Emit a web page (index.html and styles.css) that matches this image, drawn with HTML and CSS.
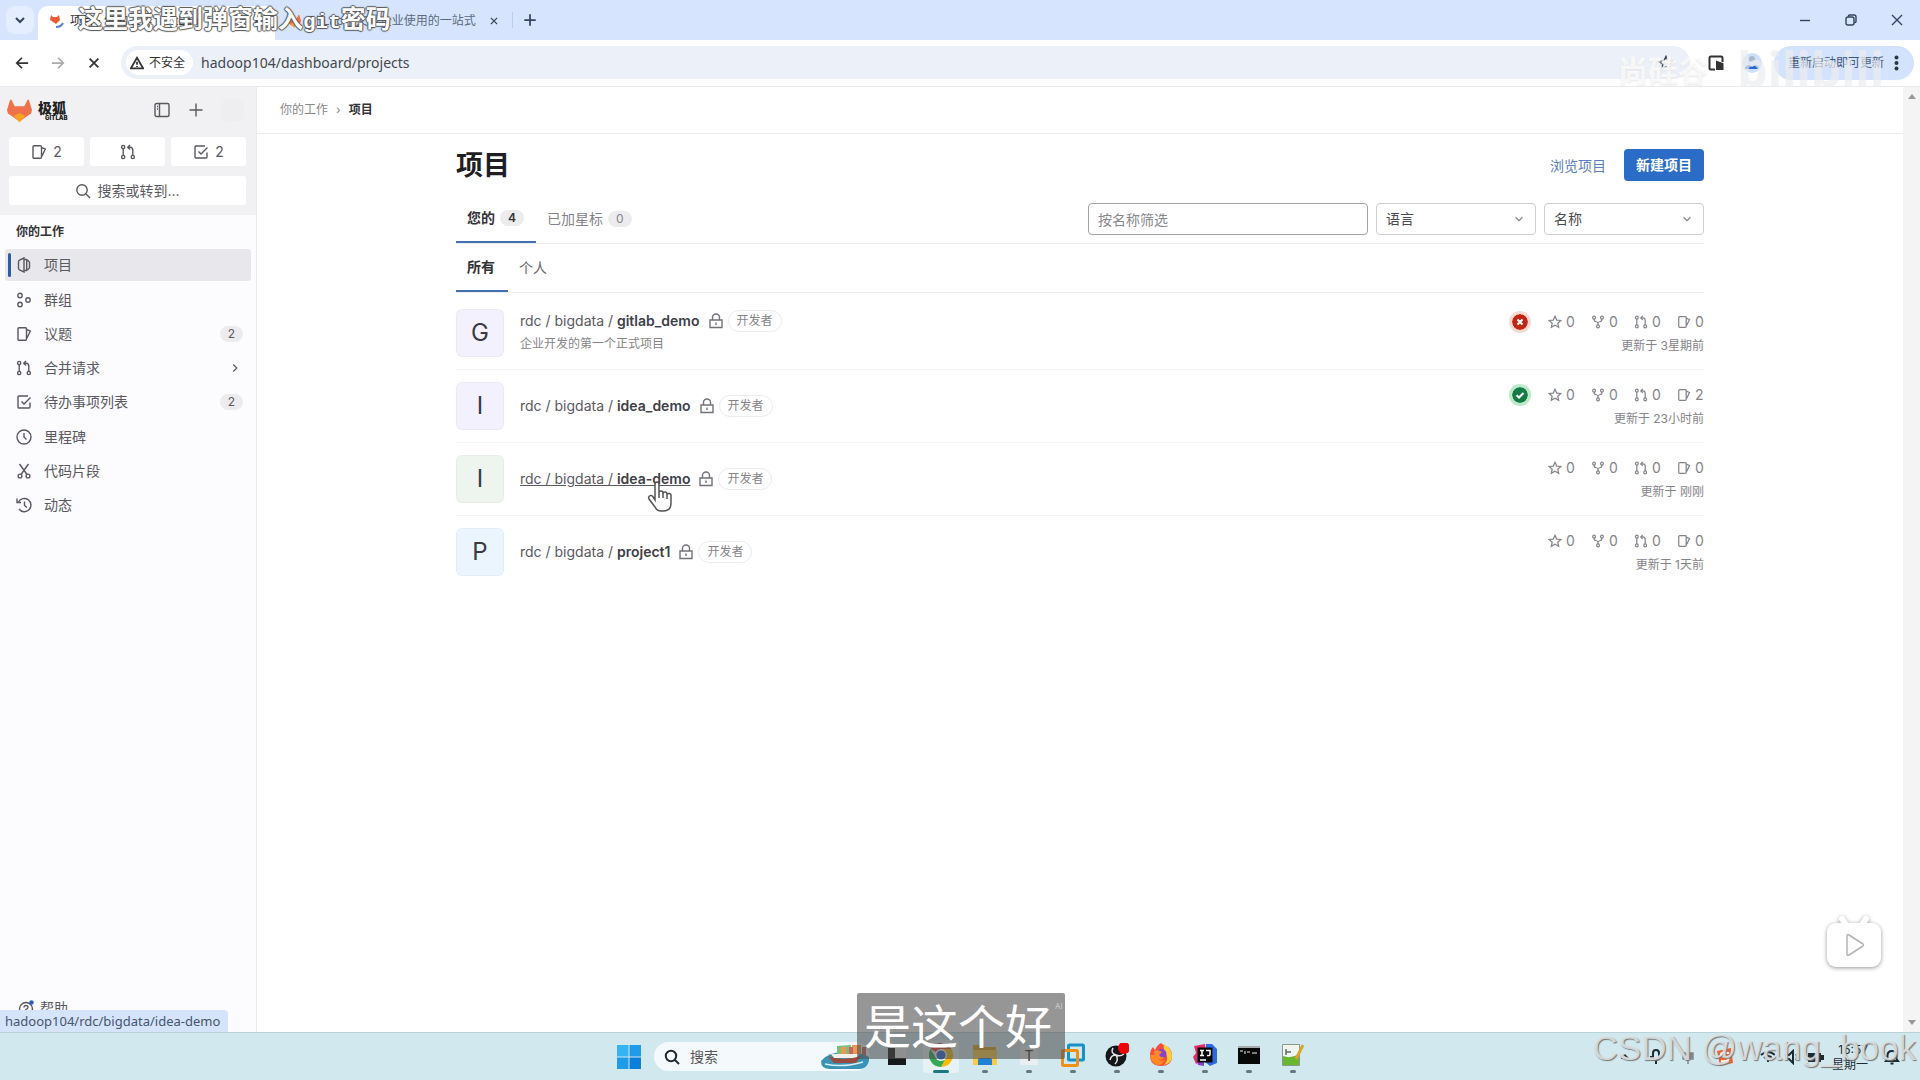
FILE: index.html
```html
<!DOCTYPE html>
<html lang="zh-CN">
<head>
<meta charset="utf-8">
<title>项目 · 你的工作 · GitLab</title>
<link rel="stylesheet" href="styles.css">
</head>
<body>
<svg class="sprite" aria-hidden="true">
  <symbol id="fox" viewBox="0 0 26 25"><path fill="#f0704c" d="M13 24 1 15.500 0 12 3 2Q4 0 5 2L8 8H18L21 2Q22 0 23 2L26 12 25 15.500Z"/><path fill="#fb8a3c" d="M0 12 13 24 5 17ZM26 12 13 24 21 17Z"/><path fill="#fca326" d="m7 18 6-3 6 3-6 7Z"/></symbol>
  <symbol id="issue" viewBox="0 0 16 16"><path d="M3 1.800h6.500a1 1 0 0 1 1 1v10.400a1 1 0 0 1-1 1H3a1 1 0 0 1-1-1V2.800a1 1 0 0 1 1-1ZM10.500 3.500l3.800 1.600L11 12"/></symbol>
  <symbol id="merge" viewBox="0 0 16 16"><circle cx="3.200" cy="3" r="1.600"/><circle cx="3.200" cy="13" r="1.600"/><circle cx="12.800" cy="13" r="1.600"/><path d="M3.200 4.600v6.800M12.800 11.400V6q0-2.700-2.700-2.700H8M10 1 7.700 3.300 10 5.600"/></symbol>
  <symbol id="todo" viewBox="0 0 16 16"><path d="M14 8.500V13a1 1 0 0 1-1 1H3a1 1 0 0 1-1-1V3a1 1 0 0 1 1-1h9M5.500 7.500 8 10l6.500-6.500"/></symbol>
  <symbol id="search" viewBox="0 0 16 16"><circle cx="7" cy="7" r="5.200"/><path d="m11 11 4 4"/></symbol>
  <symbol id="project" viewBox="0 0 16 16"><path d="M8 1 3.500 3.200Q2.500 3.800 2.500 5v6q0 1.200 1 1.800L8 15ZM8 2.500h2.500l2.500 2q.500.500.500 1.200v4.600q0 .700-.500 1.200l-2.500 2H8M10.700 2.800v10.400"/></symbol>
  <symbol id="group" viewBox="0 0 16 16"><circle cx="4" cy="3.500" r="2.200"/><circle cx="4" cy="12.500" r="2.200"/><circle cx="12" cy="8" r="2.200"/></symbol>
  <symbol id="clock" viewBox="0 0 16 16"><circle cx="8" cy="8" r="7"/><path d="M8 4v4l2.500 2.500"/></symbol>
  <symbol id="snippet" viewBox="0 0 16 16"><circle cx="4" cy="13" r="1.900"/><circle cx="12" cy="13" r="1.900"/><path d="M3.500 1 11 11.500M12.500 1 5 11.500"/></symbol>
  <symbol id="history" viewBox="0 0 16 16"><path d="M2.500 5a6.600 6.600 0 1 1 .500 7M1 1.500V5.500h4M8.500 4.500v4L11 10.500"/></symbol>
  <symbol id="lock" viewBox="0 0 16 16"><path d="M2 7h12v7.500H2ZM4.500 7V4.500a3.500 3.500 0 0 1 7 0V7M8 9.500v2.500"/></symbol>
  <symbol id="star" viewBox="0 0 16 16"><path d="m8 1.500 2 4.300 4.700.500-3.500 3.100 1 4.600L8 11.700 3.800 14l1-4.600L1.300 6.300 6 5.800Z"/></symbol>
  <symbol id="fork" viewBox="0 0 16 16"><circle cx="3.500" cy="3" r="1.600"/><circle cx="12.500" cy="3" r="1.600"/><circle cx="8" cy="13" r="1.600"/><path d="M3.500 4.600q0 2.900 2.500 3.100 2 .200 2 1.800v2M12.500 4.600q0 2.900-2.500 3.100-2 .200-2 1.800"/></symbol>
  <symbol id="chev" viewBox="0 0 16 16"><path d="m4 6 4 4 4-4"/></symbol>
  <symbol id="chevr" viewBox="0 0 16 16"><path d="m6 4 4 4-4 4"/></symbol>
  <symbol id="x" viewBox="0 0 16 16"><path d="m3 3 10 10M13 3 3 13"/></symbol>
  <symbol id="plus" viewBox="0 0 16 16"><path d="M8 1.500v13M1.500 8h13"/></symbol>
  <symbol id="arrow" viewBox="0 0 16 16"><path d="M15 8H2M8 2 2 8l6 6"/></symbol>
</svg>

<header class="browser">
  <div class="tabstrip">
    <button class="tab-menu" aria-label="搜索标签页"><svg class="i bold"><use href="#chev"/></svg></button>
    <div class="tab active">
      <svg class="fav" viewBox="0 0 14 14"><path fill="#ee5a32" d="M6 10 0 6 1 1l2 2h4l2-2 1 5Z"/><path fill="none" stroke="#5b7fd6" stroke-width="2" d="M6 13q5 0 7-4"/></svg><span class="tab-title">项目 · 你的工作 · GitLab</span>
      <button class="bare" aria-label="关闭"><svg class="i tiny bold"><use href="#x"/></svg></button>
    </div>
    <div class="tab">
      <svg class="fav"><use href="#fox"/></svg><span class="tab-title fade">GitLab中文版企业使用的一站式</span>
      <button class="bare" aria-label="关闭"><svg class="i tiny bold"><use href="#x"/></svg></button>
    </div>
    <button class="bare newtab" aria-label="新标签页"><svg class="i small bold"><use href="#plus"/></svg></button>
    <div class="winctl">
      <button class="bare" aria-label="最小化"><svg class="i" viewBox="0 0 16 16"><path d="M3 8.500h10"/></svg></button>
      <button class="bare" aria-label="还原"><svg class="i" viewBox="0 0 16 16"><rect x="3" y="5" width="8" height="8" rx="2"/><path d="M5.500 5V4q0-1 1-1H11q2 0 2 2v4.500q0 1-1 1h-1"/></svg></button>
      <button class="bare" aria-label="关闭"><svg class="i"><use href="#x"/></svg></button>
    </div>
  </div>
  <div class="toolbar">
    <button class="bare nav" aria-label="后退"><svg class="i small bold"><use href="#arrow"/></svg></button>
    <button class="bare nav dim" aria-label="前进"><svg class="i small bold flip"><use href="#arrow"/></svg></button>
    <button class="bare nav" aria-label="停止"><svg class="i small bold"><use href="#x"/></svg></button>
    <div class="omnibox">
      <button class="chip"><svg class="i small bold" viewBox="0 0 16 16"><path d="M8 2 1 14h14ZM8 6.500v3.500M8 11.500v1.200"/></svg>不安全</button>
      <input class="url" aria-label="网址" value="hadoop104/dashboard/projects">
      <svg class="i"><use href="#star"/></svg>
    </div>
    <button class="bare ext" aria-label="扩展程序"><svg class="i bold" viewBox="0 0 16 16"><path d="M7 14.500H3q-1.500 0-1.500-1.500V3Q1.500 1.500 3 1.500h10q1.500 0 1.500 1.500v4"/><path fill="#333" d="M9 7v7h5.500V9Z"/></svg></button>
    <button class="bare user" aria-label="用户"><svg width="20" height="20" viewBox="0 0 20 20"><circle cx="10" cy="10" r="10" fill="#cfe0fb"/><circle cx="10" cy="6" r="3" fill="#aab8ca"/><path fill="#2866d2" d="M3 16q0-3.500 4-4l3 2 3-2q4 .500 4 4Z"/></svg></button>
    <button class="relaunch">重新启动即可更新<svg width="5" height="16" viewBox="0 0 5 16" fill="#2b3647"><circle cx="2.500" cy="2.500" r="2"/><circle cx="2.500" cy="8" r="2"/><circle cx="2.500" cy="13.500" r="2"/></svg></button>
  </div>
</header>

<div class="page">
  <aside class="sidebar">
    <div class="side-top">
      <div class="brand">
        <svg class="logo"><use href="#fox"/></svg>
        <div class="brand-name">极狐<small>GITLAB</small></div>
        <button class="bare" aria-label="收起侧边栏"><svg class="i" viewBox="0 0 16 16"><rect x="1" y="1.500" width="14" height="13" rx="1.500"/><path d="M5.500 1.500v13M3 4.500h1M3 7h1"/></svg></button>
        <button class="bare" aria-label="新建"><svg class="i"><use href="#plus"/></svg></button>
        <span class="me"></span>
      </div>
      <div class="counts">
        <button><svg class="i"><use href="#issue"/></svg>2</button>
        <button aria-label="合并请求"><svg class="i"><use href="#merge"/></svg></button>
        <button><svg class="i"><use href="#todo"/></svg>2</button>
      </div>
      <button class="goto"><svg class="i"><use href="#search"/></svg>搜索或转到...</button>
    </div>
    <h2 class="side-title">你的工作</h2>
    <nav class="side-nav">
      <a href="#" class="current"><svg class="i"><use href="#project"/></svg>项目</a>
      <a href="#"><svg class="i"><use href="#group"/></svg>群组</a>
      <a href="#"><svg class="i"><use href="#issue"/></svg>议题<span class="pill">2</span></a>
      <a href="#"><svg class="i"><use href="#merge"/></svg>合并请求<svg class="i small end"><use href="#chevr"/></svg></a>
      <a href="#"><svg class="i"><use href="#todo"/></svg>待办事项列表<span class="pill">2</span></a>
      <a href="#"><svg class="i"><use href="#clock"/></svg>里程碑</a>
      <a href="#"><svg class="i"><use href="#snippet"/></svg>代码片段</a>
      <a href="#"><svg class="i"><use href="#history"/></svg>动态</a>
    </nav>
    <button class="help"><svg class="i" viewBox="0 0 16 16"><circle cx="8" cy="9" r="6.500"/><path d="M6 7.500q0-2 2-2t2 2q0 1-2 2v1.500"/><circle cx="13.500" cy="2.500" r="2.200" fill="#2a5fc0" stroke="none"/></svg>帮助</button>
    <div class="link-status">hadoop104/rdc/bigdata/idea-demo</div>
  </aside>

  <main class="main">
    <nav class="crumbs"><a href="#">你的工作</a><span>›</span><b>项目</b></nav>
    <div class="content">
      <div class="heading">
        <h1>项目</h1>
        <a class="explore" href="#">浏览项目</a>
        <button class="primary">新建项目</button>
      </div>
      <div class="tabs">
        <a href="#" class="on">您的<span class="pill">4</span></a>
        <a href="#">已加星标<span class="pill">0</span></a>
        <div class="filters">
          <input class="field filter" aria-label="按名称筛选" placeholder="按名称筛选">
          <label class="pick"><select class="field" aria-label="语言"><option>语言</option></select><svg class="i small"><use href="#chev"/></svg></label>
          <label class="pick"><select class="field" aria-label="排序"><option>名称</option></select><svg class="i small"><use href="#chev"/></svg></label>
        </div>
      </div>
      <div class="tabs sub">
        <a href="#" class="on">所有</a>
        <a href="#">个人</a>
      </div>
      <ul class="projects">
        <li>
          <span class="avatar violet">G</span>
          <div class="info">
            <div class="line"><a href="#">rdc / bigdata / <b>gitlab_demo</b></a><svg class="i"><use href="#lock"/></svg><span class="role">开发者</span></div>
            <p>企业开发的第一个正式项目</p>
          </div>
          <div class="meta">
            <div class="stats"><svg class="ci fail" viewBox="0 0 16 16"><circle cx="8" cy="8" r="8"/><path d="m5.500 5.500 5 5M10.500 5.500l-5 5"/></svg><span><svg class="i small"><use href="#star"/></svg>0</span><span><svg class="i small"><use href="#fork"/></svg>0</span><span><svg class="i small"><use href="#merge"/></svg>0</span><span><svg class="i small"><use href="#issue"/></svg>0</span></div>
            <time>更新于 3星期前</time>
          </div>
        </li>
        <li>
          <span class="avatar violet">I</span>
          <div class="info">
            <div class="line"><a href="#">rdc / bigdata / <b>idea_demo</b></a><svg class="i"><use href="#lock"/></svg><span class="role">开发者</span></div>
          </div>
          <div class="meta">
            <div class="stats"><svg class="ci pass" viewBox="0 0 16 16"><circle cx="8" cy="8" r="8"/><path d="m4.500 8.200 2.500 2.300 4.500-4.500"/></svg><span><svg class="i small"><use href="#star"/></svg>0</span><span><svg class="i small"><use href="#fork"/></svg>0</span><span><svg class="i small"><use href="#merge"/></svg>0</span><span><svg class="i small"><use href="#issue"/></svg>2</span></div>
            <time>更新于 23小时前</time>
          </div>
        </li>
        <li>
          <span class="avatar green">I</span>
          <div class="info">
            <div class="line"><a href="#" class="hovered">rdc / bigdata / <b>idea-demo</b><svg class="cursor" viewBox="0 0 26 32"><path d="M8 19V3.500Q8 1 10 1t2 2.500V12q0-2 2-2t2 2v1q0-2 2-2t2 2v1q0-1.500 2-1.500t2 2V22q0 8-8 8h-2q-4 0-6-4l-6-8q-1-2 .500-3t3 0Z"/><path fill="none" d="M12 12v5M16 13v4M20 14v4"/></svg></a><svg class="i"><use href="#lock"/></svg><span class="role">开发者</span></div>
          </div>
          <div class="meta">
            <div class="stats"><span><svg class="i small"><use href="#star"/></svg>0</span><span><svg class="i small"><use href="#fork"/></svg>0</span><span><svg class="i small"><use href="#merge"/></svg>0</span><span><svg class="i small"><use href="#issue"/></svg>0</span></div>
            <time>更新于 刚刚</time>
          </div>
        </li>
        <li>
          <span class="avatar blue">P</span>
          <div class="info">
            <div class="line"><a href="#">rdc / bigdata / <b>project1</b></a><svg class="i"><use href="#lock"/></svg><span class="role">开发者</span></div>
          </div>
          <div class="meta">
            <div class="stats"><span><svg class="i small"><use href="#star"/></svg>0</span><span><svg class="i small"><use href="#fork"/></svg>0</span><span><svg class="i small"><use href="#merge"/></svg>0</span><span><svg class="i small"><use href="#issue"/></svg>0</span></div>
            <time>更新于 1天前</time>
          </div>
        </li>
      </ul>
    </div>
  </main>
  <div class="scroll"><span class="up"></span><span class="down"></span></div>
</div>

<footer class="taskbar">
  <div class="dock">
    <svg class="win" viewBox="0 0 24 24"><path fill="#35b4f4" d="M0 0h11.500v11.500H0Z"/><path fill="#1e9be9" d="M12.500 0H24v11.500H12.500ZM0 12.500h11.500V24H0Z"/><path fill="#0c7fda" d="M12.500 12.500H24V24H12.500Z"/></svg>
    <div class="tasksearch">
      <svg class="i bold"><use href="#search"/></svg><input aria-label="搜索" placeholder="搜索">
      <svg width="50" height="27" viewBox="0 0 50 27"><path fill="#3a93b4" d="M1 18Q8 9 25 9t24 5q1 12-10 12H10Q1 26 1 18Z"/><path fill="#79bf7a" d="M17 3l14-1v9H17Z"/><path fill="#e89a55" d="M21 4h5v7h-5ZM32 2h9v9h-9Z"/><path fill="#c8645a" d="M29 4h4v7h-4ZM42 4h4v8h-4Z"/><path fill="#f6efe6" d="M11 11h28l-2 4H14Z"/><path fill="#9b4a3e" d="M8 13q14 6 33 0l-5 7H14Z"/><path stroke="#d9edf4" stroke-width="1.500" fill="none" d="M5 21q18 4 38-2"/></svg>
    </div>
    <div class="app"><svg viewBox="0 0 24 24"><path fill="#eceff0" d="M6 2h15v15H6Z"/><path fill="#15191b" d="M3 5h7v10h11v7H3Z"/></svg></div>
    <div class="app run front"><svg viewBox="0 0 24 24"><path fill="#ea4335" d="M12 12 1.600 6A12 12 0 0 1 22.400 6Z"/><path fill="#fbbc05" d="M12 12V6h10.400A12 12 0 0 1 12 24l5-9Z"/><path fill="#34a853" d="M1.600 6A12 12 0 0 0 12 24l5-9H7Z"/><circle cx="12" cy="12" r="6" fill="#fff"/><circle cx="12" cy="12" r="4.600" fill="#2566cf"/></svg></div>
    <div class="app run"><svg viewBox="0 0 24 24"><path fill="#dba21b" d="M0 2h9l2 2h12v8H0Z"/><path fill="#fbcb45" d="M0 7h24v15H0Z"/><path fill="#1f83d3" d="M5 22v-5q0-2 2-2h10q2 0 2 2v5Z"/></svg></div>
    <div class="app run"><svg viewBox="0 0 24 24"><rect x="3" y="3" width="18" height="19" fill="#eceff1"/><text x="12" y="18" text-anchor="middle" class="t-icon">T</text></svg></div>
    <div class="app run"><svg viewBox="0 0 24 24" fill="none" stroke-width="3"><rect x="7.500" y="2" width="15" height="15" rx="1" stroke="#1791c8"/><rect x="1.500" y="7.500" width="15" height="15" rx="1" stroke="#ee9217"/></svg></div>
    <div class="app run"><svg viewBox="0 0 24 24"><circle cx="11" cy="13" r="10.500" fill="#15161a"/><path d="M8 5q-3 5 3 7 4 2 8-1M11 12q-5 0-6 5M11 12q3 5-1 9" stroke="#e5e5e5" fill="none" stroke-width="1.500"/><circle cx="19" cy="5" r="6" fill="#f20509"/></svg></div>
    <div class="app run"><svg viewBox="0 0 24 24"><path fill="#f6503b" d="M12 23Q1 23 1 12q0-5 3-8l2 3q2-5 6-7 3 3 7 4 4 3 4 9 0 10-11 10Z"/><path fill="#ffca3a" d="M15 1q8 5 8 12 0 7-8 9 5-5 2-11-3-5-2-10Z"/><path fill="#fc8a25" d="M1 12q7-1 8 3t7 2q-3 6-8 5-6-2-7-10Z"/><circle cx="12.500" cy="11" r="5" fill="#8a3fd0"/><path fill="#fb8b28" d="M5 8q4-2 8 1l-3 3q2 3 6 2-3 4-7 2-4-3-4-8Z"/></svg></div>
    <div class="app run"><svg viewBox="0 0 24 24"><path fill="#e62c67" d="M1 3 12 1v14L3 21 0 14l3-4Z"/><path fill="#2c6be0" d="M13 1h6l5 5v14l-7 3-6-5Z"/><path fill="#8442c7" d="M3 14h8v9l-6-1Z"/><path fill="#08080a" d="M4.500 4.500h15v15h-15Z"/><path stroke="#fff" stroke-width="1.500" fill="none" d="M7 7.500h4M9 7.500v5M7 12.500h4M13 7.500h4v4q0 1.500-3 1M7 17h6"/></svg></div>
    <div class="app run"><svg viewBox="0 0 24 24"><rect x="1" y="3" width="22" height="18" fill="#070808"/><path fill="#a8abae" d="M1 3h22v2H1Z"/><path stroke="#eee" d="M3 8h3M8 8v3M10 9h3M15 10h5" fill="none"/></svg></div>
    <div class="app run"><svg viewBox="0 0 24 24"><path fill="#f1f5ef" stroke="#8a9a8a" d="M1.500 1.500h17v21h-17Z"/><path fill="#67b82f" d="M2 13q8 3 16-2v11H2Z"/><path stroke="#5f6b66" stroke-width="1.500" fill="none" d="M5 6v6M5 9h5"/><path stroke="#dba52c" stroke-width="3" d="m22 2-7 14"/></svg></div>
  </div>
  <div class="tray">
    <svg class="i small bold up-chev"><use href="#chev"/></svg>
    <svg class="i bold" viewBox="0 0 16 16"><path d="M5 8V4q0-3 3-3t3 3v4q0 3-3 3T5 8ZM8 11v4M2 8h2"/></svg>
    <svg class="i" viewBox="0 0 16 16"><path fill="#7d8590" stroke="#7d8590" d="M3 4h10v6H3ZM8 1v14"/></svg>
    <svg class="s-icon" viewBox="0 0 18 18"><path fill="#ed6430" d="M1 3 15 0l2 15-13 3Z"/><path fill="none" stroke="#fff" stroke-width="2" d="M13 5q-7-1-8 1t4 3 3 3-7 1"/></svg>
    <div class="sys">
      <svg class="i bold" viewBox="0 0 16 16"><path d="M1 6q7-6 14 0M4 9q4-4 8 0M7 12h2"/></svg>
      <svg class="i bold" viewBox="0 0 16 16"><path d="M2 6h3l4-4v12l-4-4H2ZM12 5q2 3 0 6"/></svg>
      <svg class="i bold" viewBox="0 0 16 16"><path fill="#1d2a30" d="M1 5h11v7H1ZM12 7h3v3h-3Z"/></svg>
    </div>
    <div class="when"><span>15:57</span><span>星期一</span></div>
    <svg class="i bold" viewBox="0 0 16 16"><path d="M2 12h12l-1.500-2V6.500q0-4.500-4.500-4.500T3.500 6.500V10ZM6.500 14.500h3"/></svg>
  </div>
</footer>

<div class="note">这里我遇到弹窗输入<span>git</span>密码</div>
<div class="mark-a">尚硅谷</div>
<div class="mark-b">bilibili</div>
<svg class="tv" viewBox="0 0 60 60"><path stroke="#fff" stroke-width="6" stroke-linecap="round" d="m18 6 5 7M42 6l-5 7"/><rect x="3" y="10" width="54" height="44" rx="9" fill="#fff"/><path fill="#fff" stroke="#b5b5b5" stroke-width="1.500" stroke-linejoin="round" d="M23 23q0-2 2-1l14 9q1 1 0 2l-14 9q-2 1-2-1Z"/></svg>
<div class="subtitle">是这个好<small>AI</small></div>
<div class="csdn">CSDN @wang_book</div>
</body>
</html>
```
FILE: styles.css
```css
* { box-sizing: border-box; }
body {
  margin: 0;
  min-height: 100vh;
  display: flex;
  flex-direction: column;
  position: relative;
  overflow-x: hidden;
  font: 14px/20px Inter, "Noto Sans CJK SC", sans-serif;
  color: #5a595f;
  background: #fff;
}
button, input, select { font: inherit; color: inherit; }
button { border: 0; padding: 0; background: none; }
a { color: inherit; text-decoration: none; }
h1, h2, p, ul { margin: 0; padding: 0; }
.sprite { display: none; }
.i { width: 16px; height: 16px; flex: none; fill: none; stroke: currentColor; stroke-width: 1.4; }
.i.small { width: 14px; height: 14px; }
.i.tiny { width: 10px; height: 10px; }
.i.bold { stroke-width: 2; }
.flip { transform: scaleX(-1); }
.bare { display: flex; align-items: center; justify-content: center; }
.pill { min-width: 23px; padding: 0 8px; border-radius: 8px; background: #ececef; font-size: 12px; line-height: 16px; text-align: center; }

/* browser frame */
.tabstrip { display: flex; align-items: center; height: 40px; background: #d6e5fd; color: #35445c; }
.tab-menu { display: flex; align-items: center; justify-content: center; width: 28px; height: 28px; margin: 0 4px 0 6px; border-radius: 9px; background: #e4eefe; }
.tab { display: flex; align-items: center; gap: 6px; width: 237px; height: 34px; margin-top: 6px; padding: 0 13px 4px 12px; font-size: 12px; }
.tab.active { background: #fff; border-radius: 10px 10px 0 0; color: #333; }
.fav { width: 14px; height: 14px; flex: none; }
.tab-title { flex: 1; overflow: hidden; white-space: nowrap; }
.fade { color: #5a6a82; }
.newtab { width: 34px; height: 16px; border-left: 1px solid #b9cdec; }
.winctl { display: flex; margin-left: auto; }
.winctl button { width: 46px; height: 40px; }
.toolbar { display: flex; align-items: center; height: 47px; padding: 0 6px 1px 4px; border-bottom: 1px solid #e8eaed; color: #333; }
.nav { width: 36px; height: 32px; }
.nav.dim { color: #aaa; }
.omnibox { flex: 1; display: flex; align-items: center; height: 33px; margin-left: 9px; padding: 0 16px 0 5px; border-radius: 17px; background: #ebf0f9; }
.chip { display: flex; align-items: center; gap: 5px; height: 25px; padding: 0 8px 0 4px; border-radius: 13px; background: #fff; font-size: 12px; }
.url { flex: 1; margin-left: 8px; padding: 0; border: 0; background: none; font: 14px/20px "Noto Sans", sans-serif; color: #45484d; }
.ext { width: 36px; margin-left: 8px; }
.user { width: 36px; margin-right: 4px; }
.relaunch { display: flex; align-items: center; justify-content: space-between; width: 140px; height: 34px; padding: 0 15px 0 14px; border-radius: 17px; background: #d3e3fd; font-size: 12px; color: #42577c; }

/* page */
.page { flex: 1; display: flex; }
.sidebar { position: relative; display: flex; flex-direction: column; width: 257px; border-right: 1px solid #ececef; background: #fcfbfe; }
.side-top { display: flex; flex-direction: column; gap: 10px; padding: 7px 10px 10px 9px; background: #f1f1f3; }
.brand { display: flex; align-items: center; gap: 18px; height: 32px; margin: 0 2px 1px -2px; }
.logo { width: 25px; height: 25px; }
.brand-name { flex: 1; margin-left: -12px; display: flex; flex-direction: column; width: 27px; font-size: 14px; line-height: 15px; font-weight: 900; color: #222; }
.brand-name small { padding-left: 7px; font-size: 6px; line-height: 6px; }
.me { width: 22px; height: 22px; border-radius: 6px; background: #eeeef0; }
.counts { display: grid; grid-template-columns: repeat(3, 1fr); gap: 6px; }
.counts button, .goto { display: flex; align-items: center; justify-content: center; gap: 6px; height: 29px; border-radius: 3px; background: #fff; }
.side-title { padding: 7px 16px; font-size: 12px; line-height: 20px; color: #333238; }
.side-nav { display: flex; flex-direction: column; gap: 2px; padding: 0 5px; }
.side-nav a { display: flex; align-items: center; gap: 12px; height: 32px; padding: 0 8px 0 11px; border-radius: 3px; }
.side-nav a:nth-child(4n + 1) { margin-bottom: 1px; }
.side-nav .current { position: relative; background: #e8e8ec; }
.current::before { content: ""; position: absolute; left: 3px; top: 4px; bottom: 4px; width: 3px; border-radius: 2px; background: #2f5ca0; }
.side-nav .pill, .end { margin-left: auto; }
.end { margin-right: 1px; }
.help { display: flex; align-items: center; gap: 6px; margin: auto auto 14px 18px; }
.link-status { position: absolute; left: 0; bottom: 0; padding: 0 8px 0 5px; border-radius: 0 4px 0 0; background: #d5e3fb; font: 13px/22px "Noto Sans", sans-serif; color: #46566f; }
.main { flex: 1; min-width: 0; }
.crumbs { display: flex; align-items: center; gap: 8px; height: 47px; padding: 0 23px; border-bottom: 1px solid #ececef; font-size: 12px; color: #89888d; }
.crumbs b { color: #333238; }
.content { max-width: 1280px; margin: 0 auto; padding: 1px 16px; }
.heading { display: flex; align-items: center; gap: 18px; height: 60px; }
h1 { flex: 1; padding-top: 2px; font-size: 27px; line-height: 32px; color: #1f1e24; }
.explore { padding-top: 1px; color: #5a80c2; }
.primary { height: 32px; padding: 0 12px; border-radius: 4px; background: #2a6cc6; color: #fff; font-weight: 600; }
.tabs { display: flex; height: 49px; border-bottom: 1px solid #ececef; color: #85848a; }
.tabs > a { display: flex; align-items: center; gap: 5px; height: 48px; padding: 0 12px 0 11px; }
.tabs .on { border-bottom: 2px solid #4070ae; font-weight: 600; color: #333238; }
.sub > a { padding-right: 13px; color: #65646a; }
.filters { display: flex; gap: 8px; height: 32px; margin: 8px 0 0 auto; }
.field { width: 160px; height: 32px; padding: 0 9px; border: 1px solid #cfcfd3; border-radius: 4px; background: #fff; appearance: none; color: #4c4b51; }
.filter { width: 280px; border-color: #a2a1a6; }
.filter::placeholder { color: #89888d; }
.pick { position: relative; }
.pick .i { position: absolute; right: 10px; top: 9px; }
.projects { padding-top: 4px; list-style: none; }
.projects li { display: flex; gap: 16px; padding: 12px 0; border-bottom: 1px solid #f4f4f6; }
.projects li:last-child { border-bottom: 0; }
.avatar { width: 48px; height: 48px; border-radius: 6px; font-size: 24px; line-height: 48px; text-align: center; color: #3a3944; box-shadow: inset 0 0 0 1px rgba(0, 0, 0, .03); }
.violet { background: #f4f1ff; }
.green { background: #eef4ee; }
.blue { background: #ebf5fd; }
.info { flex: 1; display: flex; flex-direction: column; justify-content: center; font-size: 14px; }
.info p { font-size: 12px; line-height: 24px; color: #85848a; }
.line { display: flex; align-items: center; }
.line b { font-weight: 600; color: #414046; }
.line > .i { margin: 0 4px 0 8px; color: #737278; }
.hovered { position: relative; text-decoration: underline; }
.cursor { position: absolute; left: 127px; top: 12px; width: 26px; height: 32px; fill: #fff; stroke: #555; stroke-width: 1.5; }
.role { padding: 0 8px; border: 1px solid #ececef; border-radius: 11px; font-size: 12px; line-height: 20px; color: #85848a; }
.meta { display: flex; flex-direction: column; align-items: flex-end; gap: 4px; padding-top: 3px; color: #85848a; }
.stats { display: flex; align-items: center; gap: 16px; }
.stats span { display: flex; align-items: center; gap: 4px; width: 27px; }
.meta time { font-size: 12px; }
.ci { width: 16px; height: 16px; margin-right: 4px; border-radius: 50%; stroke: #fff; stroke-width: 2; }
.ci circle { stroke: none; }
.ci path { fill: none; }
.fail { fill: #c02617; box-shadow: 0 0 0 3px #fbd9d3; }
.pass { fill: #157a43; box-shadow: 0 0 0 3px #b9ebc6; }
.scroll { display: flex; flex-direction: column; justify-content: space-between; align-items: center; width: 17px; padding: 7px 0; background: #f4f4f4; }
.up, .down { border: 4px solid transparent; border-top: 0; border-bottom: 5px solid #999; }
.down { border-bottom: 0; border-top: 5px solid #999; }

/* taskbar */
.taskbar { display: grid; grid-template-columns: 1fr auto 1fr; align-items: center; height: 48px; border-top: 1px solid #b9d2d8; background: #d1e8ee; color: #1d2a30; }
.dock { grid-column: 2; display: flex; align-items: center; padding-left: 12px; }
.win { width: 24px; height: 24px; margin-right: 13px; }
.tasksearch { display: flex; align-items: center; width: 216px; height: 29px; margin-right: 5px; padding-left: 10px; border-radius: 15px; background: #f4fafc; overflow: hidden; }
.tasksearch input { flex: 1; min-width: 0; margin-left: 10px; padding: 0; border: 0; background: none; }
.tasksearch input::placeholder { color: #555; }
.app { display: flex; flex-direction: column; align-items: center; justify-content: space-between; width: 36px; height: 33px; margin: 0 4px; padding-top: 3px; border-radius: 4px; }
.app svg { width: 24px; height: 24px; }
.app.run::after { content: ""; width: 6px; height: 3px; border-radius: 2px; background: #65787e; }
.app.front { background: #e6f3f6; }
.app.front::after { width: 16px; background: #1c7780; }
.t-icon { font: 14px Inter, sans-serif; fill: #333; }
.tray { grid-column: 3; display: flex; align-items: center; justify-content: flex-end; gap: 16px; padding-right: 20px; }
.up-chev { transform: scaleY(-1); }
.s-icon { width: 18px; height: 18px; margin: 0 10px 0 4px; }
.sys { display: flex; gap: 8px; margin-right: -8px; }
.when { display: flex; flex-direction: column; align-items: flex-end; font-size: 12px; line-height: 15px; }

/* overlays on the video frame */
.note { position: absolute; left: 78px; top: 2px; font: bold 25px/30px "Noto Sans CJK SC", sans-serif; color: #fff; white-space: nowrap; text-shadow: 1px 0 1px #555, -1px 0 1px #555, 0 1px 1px #555, 0 -1px 1px #555; }
.note span { font: bold 21px/30px "Liberation Mono", monospace; }
.mark-a { position: absolute; right: 212px; top: 54px; font-size: 30px; line-height: 34px; font-weight: bold; color: rgba(255, 255, 255, .7); text-shadow: 0 1px 2px #e6e6e6; }
.mark-b { position: absolute; right: 36px; top: 40px; font: bold 48px/58px "Noto Sans", sans-serif; color: rgba(236, 237, 239, .7); }
.tv { position: absolute; right: 36px; bottom: 107px; width: 60px; height: 60px; filter: drop-shadow(0 1px 2px rgba(0, 0, 0, .4)); }
.subtitle { position: absolute; left: 857px; bottom: 21px; display: flex; padding: 2px 2px 0 7px; border-radius: 2px; background: rgba(80, 80, 80, .6); font-size: 47px; line-height: 64px; color: #fff; }
.subtitle small { margin: 6px 0 0 3px; font-size: 8px; line-height: 10px; color: #ccc; }
.csdn { position: absolute; right: 4px; bottom: 12px; font: 35px/40px "Liberation Sans", sans-serif; color: rgba(225, 230, 232, .85); text-shadow: 1px 1px 1px #777; white-space: nowrap; }
```
